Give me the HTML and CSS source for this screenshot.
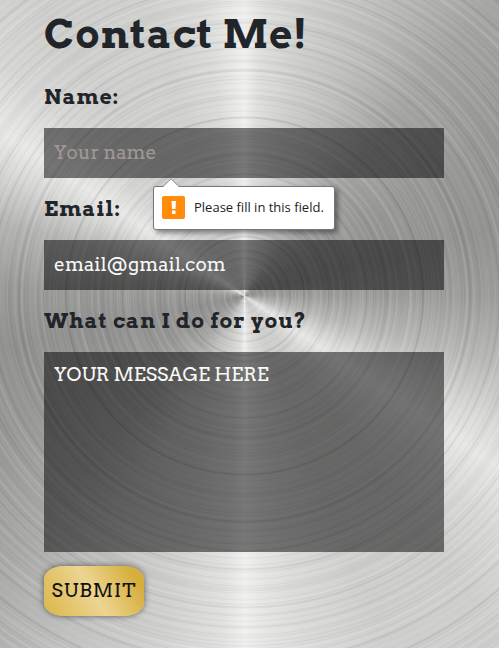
FILE: index.html
```html
<!DOCTYPE html>
<html lang="en">
<head>
<meta charset="utf-8">
<meta name="viewport" content="width=device-width, initial-scale=1">
<title>Contact Me!</title>
<link rel="stylesheet" href="styles.css">
</head>
<body>
<main class="contact">
  <h1 class="title">Contact Me!</h1>
  <form class="form" novalidate>
    <label class="label" for="name">Name:</label>
    <div class="control">
      <input class="field" id="name" type="text" placeholder="Your name" required aria-describedby="name-error">
      <div class="tip" id="name-error" role="alert">
        <svg class="tip-arrow" viewBox="0 0 18 9" aria-hidden="true"><path d="M0 9 9 0l9 9z" fill="#fff"/><path d="M0 8.500h1L9 .7l8 7.800h1" fill="none" stroke="#777"/></svg>
        <svg class="tip-icon" viewBox="0 0 23 23" aria-hidden="true"><rect width="23" height="23" rx="2" fill="#ff8c0a"/><path d="M9.500 5h4.500l-.5 8h-3.500zM10 14.500h3.500V18H10z" fill="#fff"/></svg>
        <span>Please fill in this field.</span>
      </div>
    </div>
    <label class="label" for="email">Email:</label>
    <input class="field" id="email" type="email" value="email@gmail.com">
    <label class="label" for="message">What can I do for you?</label>
    <textarea class="field message" id="message">YOUR MESSAGE HERE</textarea>
    <button class="submit" type="submit">SUBMIT</button>
  </form>
</main>
</body>
</html>
```
FILE: styles.css
```css
* { box-sizing: border-box; }

body {
  margin: 0;
  min-height: 100vh;
  color: #212529;
  font-family: Arvo, "DejaVu Serif", serif;
  background:
    repeating-radial-gradient(circle at 49% 296px, #0000 0 2px, #0000000a 3px, #0000 4px 5px, #ffffff14 6px, #0000 7px),
    repeating-radial-gradient(circle at 49% 296px, #ffffff10 0 1px, #0000 3px 6px, #0000000c 8px, #0000 9px 12px, #ffffff16 13px, #0000 15px 19px),
    repeating-radial-gradient(circle at 49% 296px, #0000 0 11px, #0000000a 13px, #0000 14px 23px, #ffffff14 25px, #0000 28px 36px, #0000000c 38px, #0000 39px 47px),
    repeating-radial-gradient(circle at 49% 296px, #0000 0 31px, #ffffff14 33px, #0000 35px 58px, #0000000c 59px, #0000 61px 83px),
    conic-gradient(from 0deg at 49% 296px,
      #efefee 0deg, #dededd 4deg, #cfcfce 12deg, #bdbdbc 25deg, #a4a4a3 40deg, #979796 58deg, #929291 75deg,
      #9c9c9b 90deg, #b8b8b7 105deg, #d8d8d7 117deg, #e6e6e5 124deg, #d8d8d7 133deg, #cececd 143deg, #cececd 158deg, #dadad9 170deg, #e4e4e3 176deg,
      #efefee 180deg, #e0e0df 184deg, #d0d0cf 194deg, #c0c0bf 208deg, #a8a8a7 222deg, #979796 240deg, #90908f 258deg,
      #999998 272deg, #b4b4b3 287deg, #d8d8d7 298deg, #e8e8e7 304deg, #d6d6d5 314deg, #cececd 325deg, #d0d0cf 342deg, #dadad9 352deg, #efefee 360deg);
}

.contact {
  padding: 8px 55px 32px 44px;
}

.title {
  margin: 0 0 24px;
  font-size: 40px;
  line-height: 52px;
  letter-spacing: 1px;
}

.form {
  display: flex;
  flex-direction: column;
}

.label {
  margin-bottom: 18px;
  font-size: 21px;
  font-weight: 700;
  line-height: 26px;
  letter-spacing: 1px;
}

.field {
  display: block;
  width: 100%;
  height: 50px;
  margin: 0 0 18px;
  padding: 0 10px;
  border: 0;
  border-radius: 0;
  outline: 0;
  color: #f8f8f8;
  background: #00000080;
  font: 19px/26px Arvo, "DejaVu Serif", serif;
}

.field::placeholder {
  color: #a29797;
  opacity: 1;
}

.control { position: relative; }

.message {
  height: 200px;
  margin-bottom: 14px;
  padding: 10px;
  resize: none;
}

.tip {
  position: absolute;
  top: 58px;
  left: 109px;
  display: flex;
  align-items: center;
  gap: 9px;
  height: 44px;
  padding: 0 10px 2px 8px;
  border: 1px solid #777;
  border-radius: 3px;
  color: #222;
  background: #fff;
  box-shadow: 3px 3px 5px #0006;
  font: 13px/20px "Open Sans", sans-serif;
  white-space: nowrap;
}

.tip-arrow {
  position: absolute;
  top: -9px;
  left: 8px;
  width: 18px;
  height: 9px;
}

.tip-icon {
  width: 23px;
  height: 23px;
}

.submit {
  align-self: flex-start;
  width: 100px;
  height: 50px;
  padding: 0;
  border: 0;
  border-radius: 20px / 13px;
  color: #111;
  background: linear-gradient(60deg, #dcb94f 5%, #ecd492 48%, #eacf84 55%, #d6ae3c 88%);
  box-shadow: 0 0 6px #0008;
  font: 19px/26px Arvo, "DejaVu Serif", serif;
  letter-spacing: 1px;
}
```
